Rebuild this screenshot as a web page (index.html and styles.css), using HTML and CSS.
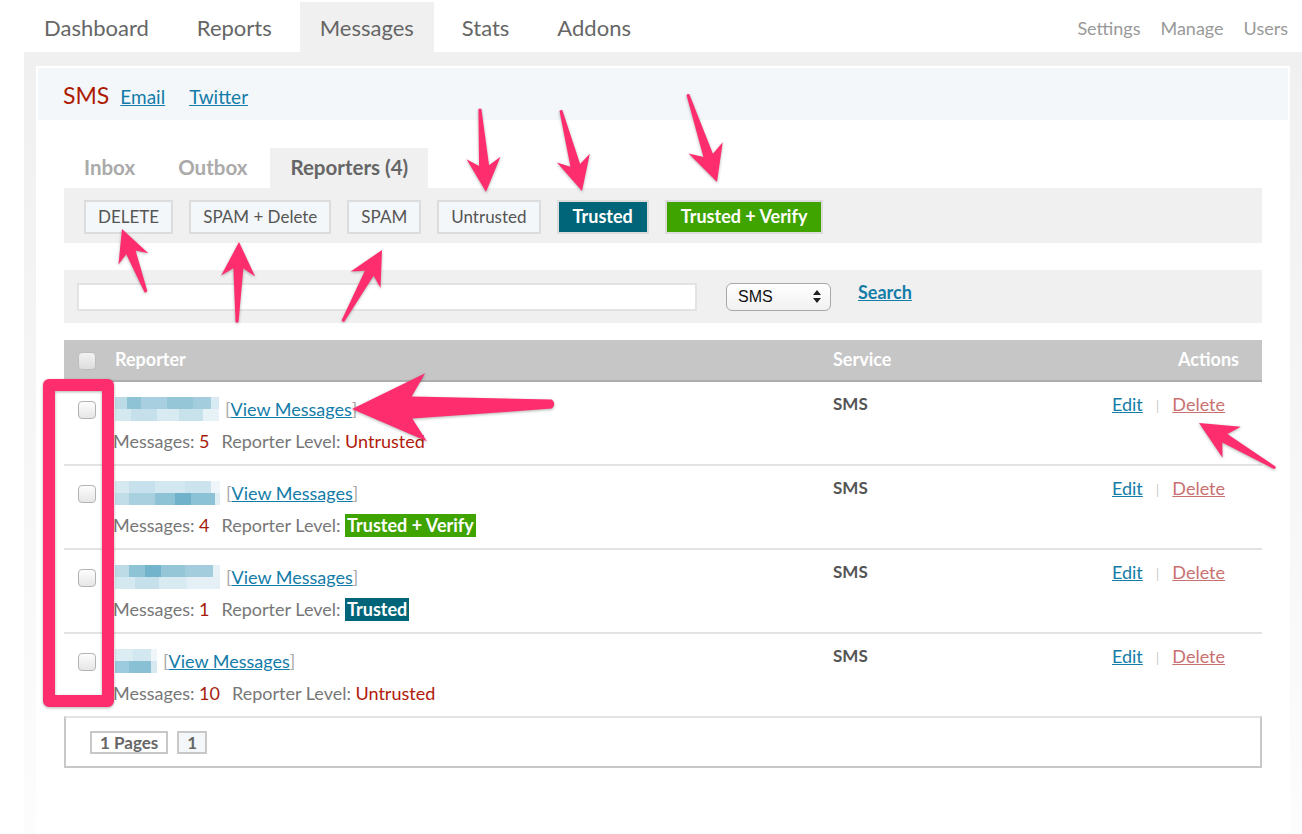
FILE: index.html
```html
<!DOCTYPE html>
<html>
<head>
<meta charset="utf-8">
<title>Messages - Reporters</title>
<link rel="stylesheet" href="styles.css">
</head>
<body>
<div class="nav">
  <ul class="main-tabs">
    <li>Dashboard</li>
    <li>Reports</li>
    <li class="active">Messages</li>
    <li>Stats</li>
    <li>Addons</li>
  </ul>
  <ul class="side-links">
    <li>Settings</li>
    <li>Manage</li>
    <li>Users</li>
  </ul>
</div>

<div class="wrap">
  <div class="panel">
    <div class="panel-head">
      <span class="sms">SMS</span>
      <a class="head-link" href="#">Email</a>
      <a class="head-link" href="#">Twitter</a>
    </div>

    <div class="content">
      <ul class="subtabs">
        <li>Inbox</li>
        <li>Outbox</li>
        <li class="active">Reporters (4)</li>
      </ul>

      <div class="actions-bar">
        <span class="btn">DELETE</span>
        <span class="btn">SPAM + Delete</span>
        <span class="btn">SPAM</span>
        <span class="btn">Untrusted</span>
        <span class="btn trusted">Trusted</span>
        <span class="btn verify">Trusted + Verify</span>
      </div>

      <div class="search-bar">
        <span class="field"></span>
        <span class="select">SMS
          <svg class="updown" width="8" height="13" viewBox="0 0 8 13"><path d="M4 0 L8 5 L0 5 Z M0 8 L8 8 L4 13 Z" fill="#222"/></svg>
        </span>
        <a class="search-link" href="#">Search</a>
      </div>

      <table class="grid">
        <thead>
          <tr>
            <th class="c-cb"><span class="cb"></span></th>
            <th class="c-rep">Reporter</th>
            <th class="c-svc">Service</th>
            <th class="c-act">Actions</th>
          </tr>
        </thead>
        <tbody>
          <tr>
            <td class="c-cb"><span class="cb"></span></td>
            <td class="c-rep">
              <div class="line1"><span class="blur b1"><i></i><i></i></span><span class="br">[</span><a href="#">View Messages</a><span class="br">]</span></div>
              <div class="line2"><span class="lbl">Messages:</span> <span class="num">5</span><span class="lbl gap">Reporter Level:</span> <span class="lvl untrusted">Untrusted</span></div>
            </td>
            <td class="c-svc">SMS</td>
            <td class="c-act"><a class="edit" href="#">Edit</a><span class="sep">|</span><a class="del" href="#">Delete</a></td>
          </tr>
          <tr>
            <td class="c-cb"><span class="cb"></span></td>
            <td class="c-rep">
              <div class="line1"><span class="blur b2"><i></i><i></i></span><span class="br">[</span><a href="#">View Messages</a><span class="br">]</span></div>
              <div class="line2"><span class="lbl">Messages:</span> <span class="num">4</span><span class="lbl gap">Reporter Level:</span> <span class="lvl verify">Trusted + Verify</span></div>
            </td>
            <td class="c-svc">SMS</td>
            <td class="c-act"><a class="edit" href="#">Edit</a><span class="sep">|</span><a class="del" href="#">Delete</a></td>
          </tr>
          <tr>
            <td class="c-cb"><span class="cb"></span></td>
            <td class="c-rep">
              <div class="line1"><span class="blur b3"><i></i><i></i></span><span class="br">[</span><a href="#">View Messages</a><span class="br">]</span></div>
              <div class="line2"><span class="lbl">Messages:</span> <span class="num">1</span><span class="lbl gap">Reporter Level:</span> <span class="lvl trusted">Trusted</span></div>
            </td>
            <td class="c-svc">SMS</td>
            <td class="c-act"><a class="edit" href="#">Edit</a><span class="sep">|</span><a class="del" href="#">Delete</a></td>
          </tr>
          <tr class="last">
            <td class="c-cb"><span class="cb"></span></td>
            <td class="c-rep">
              <div class="line1"><span class="blur b4"><i></i><i></i></span><span class="br">[</span><a href="#">View Messages</a><span class="br">]</span></div>
              <div class="line2"><span class="lbl">Messages:</span> <span class="num">10</span><span class="lbl gap">Reporter Level:</span> <span class="lvl untrusted">Untrusted</span></div>
            </td>
            <td class="c-svc">SMS</td>
            <td class="c-act"><a class="edit" href="#">Edit</a><span class="sep">|</span><a class="del" href="#">Delete</a></td>
          </tr>
        </tbody>
      </table>

      <div class="pager">
        <span class="pg">1 Pages</span>
        <span class="pg cur">1</span>
      </div>
    </div>
  </div>
</div>

<svg class="notes" width="1302" height="834" viewBox="0 0 1302 834">
  <g fill="#fe2d6e">
    <path transform="translate(486 192) rotate(85.8)" d="M0 0 L-34 -17 L-26.5 -5 L-83 -1.5 Q-84.5 0 -83 1.5 L-26.5 5 L-34 17 Z"/>
    <path transform="translate(582 191) rotate(75.3)" d="M0 0 L-34 -17 L-26.5 -5 L-83 -1.5 Q-84.5 0 -83 1.5 L-26.5 5 L-34 17 Z"/>
    <path transform="translate(717 182) rotate(71.6)" d="M0 0 L-36 -18 L-28 -5 L-92 -1.5 Q-93.5 0 -92 1.5 L-28 5 L-36 18 Z"/>
    <path transform="translate(122 229) rotate(-110.9)" d="M0 0 L-32 -16 L-25 -5 L-67 -1.5 Q-68.5 0 -67 1.5 L-25 5 L-32 16 Z"/>
    <path transform="translate(239 242) rotate(-88.6)" d="M0 0 L-34 -17 L-26.5 -5 L-80 -1.5 Q-81.5 0 -80 1.5 L-26.5 5 L-34 17 Z"/>
    <path transform="translate(382 250) rotate(-61.2)" d="M0 0 L-34 -17 L-26.5 -5 L-81 -1.5 Q-82.5 0 -81 1.5 L-26.5 5 L-34 17 Z"/>
    <path transform="translate(352 409) rotate(178.6)" d="M0 0 L-74 -34 L-60 -11 L-200 -4.5 Q-204.5 0 -200 4.5 L-60 11 L-74 34 Z"/>
    <path transform="translate(1199 423) rotate(-149.4)" d="M0 0 L-38 -18 L-30 -5 L-88 -1.5 Q-89.5 0 -88 1.5 L-30 5 L-38 18 Z"/>
  </g>
  <rect x="49" y="385" width="59" height="316" fill="none" stroke="#fe2d6e" stroke-width="12" stroke-linejoin="round"/>
</svg>
</body>
</html>
```

FILE: styles.css
```css
* { box-sizing: border-box; }

html, body {
  margin: 0;
  padding: 0;
}

body {
  font-family: Lato, "Open Sans", "DejaVu Sans", sans-serif;
  background: #fff;
  color: #666;
  width: 1302px;
  height: 834px;
  overflow: hidden;
  position: relative;
}

a { color: #137ca8; }

/* top navigation */
.nav {
  display: flex;
  justify-content: space-between;
  height: 52px;
  padding: 0 14px 0 24px;
}

.main-tabs,
.side-links,
.subtabs {
  list-style: none;
  margin: 0;
  padding: 0;
}

.main-tabs {
  display: flex;
  gap: 8px;
  margin-top: 2px;
}

.main-tabs li {
  padding: 0 20px;
  font-size: 22px;
  line-height: 51px;
  color: #666;
}

.main-tabs li.active { background: #f0f0f0; }

.side-links {
  display: flex;
  gap: 20px;
  font-size: 18px;
  line-height: 56px;
  color: #999;
}

/* grey frame */
.wrap {
  margin-left: 24px;
  padding: 14px 12px 0;
  height: 782px;
  background: linear-gradient(#f0f0f0, #fcfcfc 760px);
}

.panel {
  background: #fff;
  height: 100%;
  padding: 2px;
}

.panel-head {
  height: 52px;
  background: #f3f7fa;
  display: flex;
  align-items: baseline;
  padding: 13px 0 0 25px;
}

.sms {
  font-size: 23px;
  color: #ad1a00;
  margin-right: 11px;
}

.head-link {
  font-size: 19px;
  margin-right: 24px;
}

.content { padding: 28px 26px 0; }

/* sub tabs */
.subtabs {
  display: flex;
  gap: 3px;
  height: 40px;
}

.subtabs li {
  padding: 0 20px;
  font-size: 20.5px;
  font-weight: bold;
  line-height: 38px;
  color: #aaa;
}

.subtabs li.active {
  background: #f0f0f0;
  color: #666;
}

/* bulk actions */
.actions-bar {
  background: #f0f0f0;
  height: 55px;
  display: flex;
  gap: 16px;
  padding: 12px 0 0 20px;
}

.btn {
  height: 34px;
  border: 2px solid #dcdcdc;
  background: #f4f7f9;
  padding: 0 12px;
  font-size: 17px;
  line-height: 29px;
  color: #555;
}

.btn.trusted,
.btn.verify {
  color: #fff;
  font-weight: bold;
  font-size: 18px;
  padding: 0 14px;
}

.btn.trusted { background: #006579; }
.btn.verify { background: #3fa300; }

/* search */
.search-bar {
  margin-top: 27px;
  height: 53px;
  background: #f0f0f0;
  display: flex;
  align-items: center;
  padding-left: 13px;
}

.field {
  width: 620px;
  height: 28px;
  background: #fff;
  border: 2px solid #e3e3e3;
}

.select {
  margin-left: 29px;
  width: 105px;
  height: 28px;
  border: 1px solid #a8a8a8;
  border-radius: 6px;
  background: linear-gradient(#ffffff, #f1f1f1);
  font-family: "Liberation Sans", Arial, sans-serif;
  font-size: 16px;
  color: #111;
  display: flex;
  align-items: center;
  justify-content: space-between;
  padding: 0 9px 0 11px;
}

.search-link {
  margin-left: 27px;
  font-size: 18px;
  font-weight: bold;
  margin-top: -10px;
}

/* table */
.grid {
  width: 100%;
  margin-top: 17px;
  border-collapse: collapse;
}

.grid th {
  height: 41px;
  background: #c6c6c6;
  color: #fff;
  font-size: 18px;
  font-weight: bold;
  text-align: left;
  border-bottom: 2px solid #adadad;
  padding: 0 0 2px;
}

.grid td {
  vertical-align: top;
  padding: 14px 0 10px;
  border-bottom: 2px solid #e3e3e3;
  font-size: 18px;
}

.grid tr.last td { border-bottom: 0; }

.c-cb { width: 51px; padding-left: 14px !important; }
.c-rep { width: 715px; }
.c-svc { width: 139px; padding-left: 3px !important; }
.grid th.c-act { text-align: right; padding-right: 23px; }
.grid td.c-act { text-align: right; padding-right: 37px; }

.cb {
  display: inline-block;
  width: 18px;
  height: 18px;
  border: 1px solid #b3b3b3;
  border-radius: 4px;
  background: linear-gradient(#fdfdfd, #e6e6e6);
  vertical-align: middle;
}

th .cb { border-color: #bdbdbd; background: linear-gradient(#f2f2f2, #dedede); }
td .cb { margin-top: 1px; }

.line1 {
  height: 26px;
  line-height: 26px;
  display: flex;
  align-items: center;
}

.line2 {
  margin-top: 6px;
  height: 26px;
  line-height: 26px;
  margin-left: -2px;
}

.blur {
  display: inline-flex;
  flex-direction: column;
  height: 24px;
  margin-right: 6px;
}

.blur i { display: block; height: 12px; }

.b1 { width: 104px; }
.b1 i:first-child { background: linear-gradient(90deg, #bcdbe7 0 12px, #8ec3d6 12px 26px, #a7cfdf 26px 52px, #94c6d8 52px 78px, #a3cddd 78px 96px, #d9ebf2 96px); }
.b1 i:last-child { background: linear-gradient(90deg, #d4e8f0 0 16px, #c5e0ea 16px 42px, #d9ebf2 42px 64px, #c8e2eb 64px 88px, #e7f2f6 88px); }

.b2 { width: 105px; }
.b2 i:first-child { background: linear-gradient(90deg, #d6e9f1 0 14px, #c6e1eb 14px 40px, #d2e7ef 40px 70px, #cbe3ec 70px 96px, #eef6f9 96px); }
.b2 i:last-child { background: linear-gradient(90deg, #c0dde8 0 14px, #a8d0df 14px 40px, #8ec3d6 40px 60px, #6fb2ca 60px 76px, #8cc2d5 76px 100px, #e0eef4 100px); }

.b3 { width: 105px; }
.b3 i:first-child { background: linear-gradient(90deg, #bcdbe7 0 14px, #8ec3d6 14px 30px, #72b4cb 30px 46px, #94c6d8 46px 70px, #a3cddd 70px 98px, #e7f2f6 98px); }
.b3 i:last-child { background: linear-gradient(90deg, #d4e8f0 0 20px, #c5e0ea 20px 44px, #d9ebf2 44px 72px, #e4f0f5 72px); }

.b4 { width: 42px; }
.b4 i:first-child { background: linear-gradient(90deg, #dbecf3 0 18px, #d2e7ef 18px 36px, #eef6f9 36px); }
.b4 i:last-child { background: linear-gradient(90deg, #9ccade 0 14px, #89c0d4 14px 36px, #d6e9f1 36px); }

.br { color: #aaa; }

.lbl { color: #777; }
.lbl.gap { margin-left: 12px; }
.num { color: #a51c0c; }

.lvl.untrusted { color: #b01a0a; }
.lvl.verify,
.lvl.trusted {
  color: #fff;
  font-weight: bold;
  padding: 0 2px;
  display: inline-block;
  line-height: 23px;
}
.lvl.verify { background: #3fa300; }
.lvl.trusted { background: #006579; }

.grid td.c-svc {
  font-weight: bold;
  color: #555;
  font-size: 17px;
  padding-top: 11px;
}

.grid td.c-act { padding-top: 11px; }

.edit { color: #137ca8; }
.sep { color: #ccc; font-size: 14px; margin: 0 13px 0 13px; }
.del { color: #c97070; }

/* pager */
.pager {
  height: 52px;
  border: 2px solid #c8c8c8;
  border-top-color: #e3e3e3;
  display: flex;
  align-items: center;
  gap: 9px;
  padding-left: 24px;
}

.pg {
  height: 23px;
  border: 2px solid #c8c8c8;
  padding: 0 8px;
  font-size: 17px;
  font-weight: bold;
  line-height: 19px;
  color: #666;
}

.pg.cur { background: #f3f7fa; }

/* annotations */
.notes {
  position: absolute;
  left: 0;
  top: 0;
  pointer-events: none;
  filter: drop-shadow(0 1px 1.5px rgba(0, 0, 0, 0.3));
}
```
